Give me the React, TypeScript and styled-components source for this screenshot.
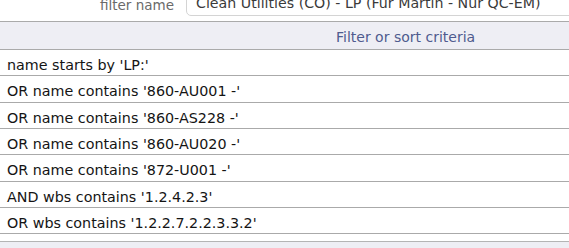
import type { ReactElement } from 'react';
import styled, { createGlobalStyle } from 'styled-components';

const GlobalStyle = createGlobalStyle`
	html, body {
		margin: 0;
		padding: 0;
		background: #ffffff;
		overflow: hidden;
	}

	body {
		font-family: 'DejaVu Sans', Verdana, sans-serif;
	}
`;

const criteria = [
	"name starts by 'LP:'",
	"OR name contains '860-AU001 -'",
	"OR name contains '860-AS228 -'",
	"OR name contains '860-AU020 -'",
	"OR name contains '872-U001 -'",
	"AND wbs contains '1.2.4.2.3'",
	"OR wbs contains '1.2.2.7.2.2.3.3.2'",
];

const Page = styled.div`
	width: 569px;
	height: 248px;
	overflow: hidden;
	display: flex;
	flex-direction: column;
`;

const FilterBar = styled.div`
	display: flex;
	align-items: flex-end;
	height: 16px;
	overflow: hidden;
	flex-shrink: 0;
`;

const Label = styled.label`
	width: 174px;
	margin-right: 12px;
	padding-bottom: 1px;
	text-align: right;
	font-size: 13.5px;
	line-height: 20px;
	color: #6a6a6a;
	flex-shrink: 0;
`;

const NameInput = styled.div`
	flex-shrink: 0;
	width: 420px;
	padding: 0 9px 2px;
	border: 1px solid #d4d4d4;
	border-radius: 5px;
	font-size: 14.2px;
	line-height: 20px;
	color: #3a3a3a;
	white-space: nowrap;
`;

const Criteria = styled.div`
	margin-top: 5px;
	display: flex;
	flex-direction: column;
`;

const Header = styled.div`
	height: 29px;
	box-sizing: border-box;
	padding: 5px 0 0 336px;
	background: #eeeef4;
	border-top: 1px solid #aaaaaa;
	border-bottom: 1px solid #aaaaaa;
	font-size: 14px;
	line-height: 20px;
	color: #4f5b8e;
	white-space: nowrap;
`;

const Row = styled.div`
	height: 26.33px;
	box-sizing: border-box;
	padding: 5px 7px 0;
	border-bottom: 1px solid #aaaaaa;
	font-size: 14.3px;
	line-height: 20px;
	color: #141414;
	white-space: nowrap;
`;

const Footer = styled.div`
	margin-top: 7px;
	flex: 1;
	background: #eeeef4;
	border-top: 1px solid #b4b4b4;
`;

export default function App(): ReactElement {
	return (
		<Page>
			<GlobalStyle />
			<FilterBar>
				<Label>filter name</Label>
				<NameInput>Clean Utilities (CO) - LP (Fur Martin - Nur QC-EM)</NameInput>
			</FilterBar>
			<Criteria>
				<Header>Filter or sort criteria</Header>
				{criteria.map((text) => (
					<Row key={text}>{text}</Row>
				))}
			</Criteria>
			<Footer />
		</Page>
	);
}
